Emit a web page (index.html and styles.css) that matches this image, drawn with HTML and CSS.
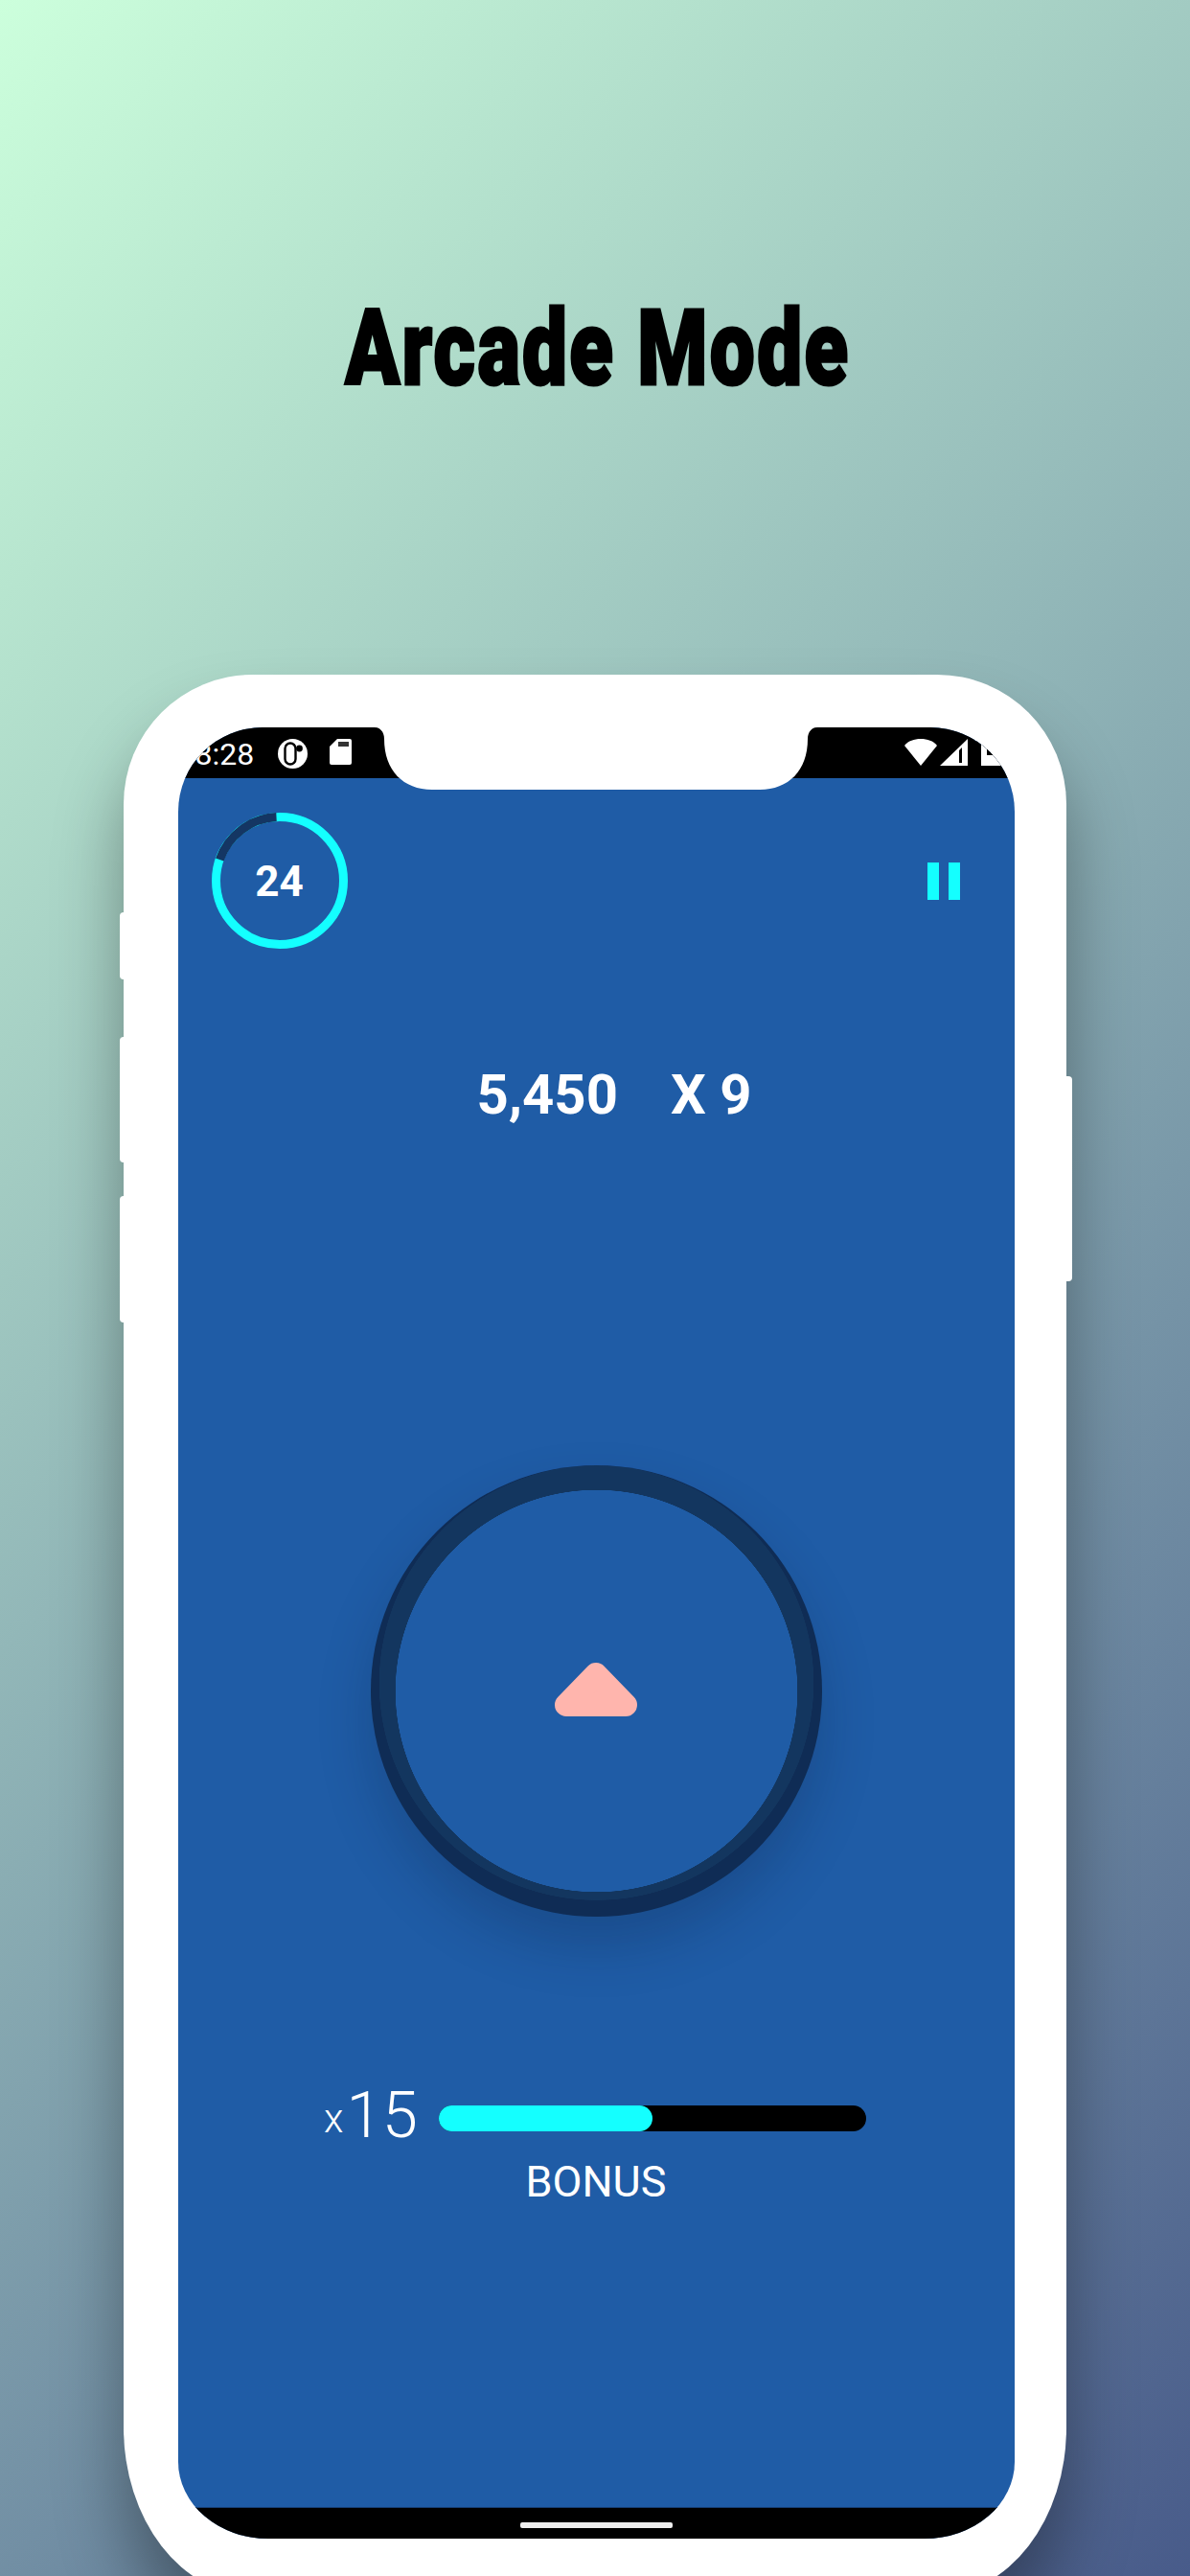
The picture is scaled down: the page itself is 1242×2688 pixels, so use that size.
FILE: index.html
```html
<!DOCTYPE html>
<html lang="en">
<head>
<meta charset="utf-8">
<title>Arcade Mode</title>
<link rel="stylesheet" href="styles.css">
</head>
<body>
<main class="page">
  <h1 class="title">Arcade Mode</h1>
  <div class="phone">
    <span class="btn btn-l1"></span>
    <span class="btn btn-l2"></span>
    <span class="btn btn-l3"></span>
    <span class="btn btn-r"></span>
    <div class="screen">
      <svg class="notch" viewBox="0 0 462 65" width="462" height="65" aria-hidden="true">
        <path d="M0 0H462C456 0 452 5 452 12C452 45 432 65 402 65H60C30 65 10 45 10 12C10 5 6 0 0 0Z" fill="#fff"/>
      </svg>
      <div class="status">
        <div class="status-left">
          <span class="time">8:28</span>
          <svg class="ic-circle" viewBox="0 0 31 31" width="31" height="31" aria-hidden="true">
            <circle cx="15.5" cy="15.5" r="15.5" fill="#fff"/>
            <rect x="7.5" y="4.5" width="11" height="22" rx="5.5" fill="none" stroke="#000" stroke-width="2.4"/>
            <circle cx="22.5" cy="10" r="3.4" fill="#000"/>
          </svg>
          <svg class="ic-sd" viewBox="0 0 23 27" width="23" height="27" aria-hidden="true">
            <path d="M8 0H21a2 2 0 0 1 2 2V25a2 2 0 0 1-2 2H2a2 2 0 0 1-2-2V8Z" fill="#fff"/>
            <rect x="9" y="3" width="11" height="5" fill="#333"/>
          </svg>
        </div>
        <div class="status-right">
          <svg viewBox="0 0 34 28" width="34" height="28" aria-hidden="true">
            <path d="M17 28L0 7C4 2 10 0 17 0S30 2 34 7Z" fill="#fff"/>
          </svg>
          <svg viewBox="0 0 29 28" width="29" height="28" aria-hidden="true">
            <path d="M0 28L29 0V28Z" fill="#fff"/>
            <path d="M20 12V25H23V9Z" fill="#000"/>
          </svg>
          <span class="battery"></span>
        </div>
      </div>
      <header class="hud">
        <div class="timer">
          <svg viewBox="0 0 142 142" width="142" height="142" aria-hidden="true">
            <circle cx="71" cy="71" r="66.5" fill="none" stroke="#14ffff" stroke-width="9"/>
            <path d="M67.5 4.6A66.5 66.5 0 0 0 8.3 49" fill="none" stroke="#143663" stroke-width="9"/>
          </svg>
          <span class="timer-num">24</span>
        </div>
        <div class="pause"><span></span><span></span></div>
      </header>
      <div class="score"><span>5,450</span><span>X 9</span></div>
      <div class="ring">
        <svg viewBox="0 0 86 56" width="86" height="56" class="arrow" aria-hidden="true">
          <path d="M43 12L12 44H74Z" fill="#ffb5ad" stroke="#ffb5ad" stroke-width="24" stroke-linejoin="round"/>
        </svg>
      </div>
      <div class="bonus-row">
        <div class="mult"><span class="mult-x">x</span><span class="mult-n">15</span></div>
        <div class="track"><div class="fill"></div></div>
      </div>
      <div class="bonus-label">BONUS</div>
      <div class="nav"><span class="handle"></span></div>
    </div>
  </div>
</main>
</body>
</html>
```
FILE: styles.css
```css
* { box-sizing: border-box; }
html, body { margin: 0; padding: 0; }
body {
  width: 1242px;
  height: 2688px;
  overflow: hidden;
  font-family: Roboto, "Liberation Sans", sans-serif;
}
.page {
  height: 2688px;
  overflow: hidden;
  display: flex;
  flex-direction: column;
  align-items: center;
  background: linear-gradient(135deg, #ccffdc 0%, #485b8a 100%);
}
.title {
  margin: 304px 0 0 6px;
  height: 120px;
  font-family: Roboto, "Liberation Sans", sans-serif;
  font-size: 110px;
  line-height: 120px;
  font-weight: 900;
  color: #000;
  -webkit-text-stroke: 3px #000;
  letter-spacing: 3px;
  white-space: nowrap;
  transform: scaleX(.76);
}
.phone {
  position: relative;
  flex: none;
  margin-top: 280px;
  margin-left: -1px;
  width: 984px;
  height: 2004px;
  padding: 55px 54px 55px 57px;
  background: #fff;
  border-radius: 135px 135px 135px 135px / 135px 135px 175px 175px;
  box-shadow: 0 50px 70px rgba(0, 0, 0, .35);
}
.btn {
  position: absolute;
  width: 12px;
  background: #fff;
  border-radius: 4px;
}
.btn-l1 { left: -4px; top: 248px; height: 70px; }
.btn-l2 { left: -4px; top: 378px; height: 131px; }
.btn-l3 { left: -4px; top: 544px; height: 132px; }
.btn-r { right: -6px; top: 419px; height: 214px; }
.screen {
  position: relative;
  height: 1890px;
  display: flex;
  flex-direction: column;
  align-items: center;
  background: #1f5ca6;
  border-radius: 88px 88px 94px 94px / 88px 88px 80px 80px;
  overflow: hidden;
}
.notch {
  position: absolute;
  left: 205px;
  top: 0;
}
.status {
  align-self: stretch;
  flex: none;
  height: 53px;
  display: flex;
  justify-content: space-between;
  padding: 12px 0 0 18px;
  background: #000;
  color: #fff;
}
.status-left { display: flex; align-items: flex-start; gap: 23px; }
.time { font-size: 32px; line-height: 32px; margin-right: 2px; }
.status-right { display: flex; align-items: flex-start; gap: 3px; margin-right: 11px; }
.battery {
  width: 24px;
  height: 25px;
  margin: 3px 0 0 11px;
  border-left: 6px solid #fff;
  background: linear-gradient(#000 55%, #fff 55%);
}
.hud {
  align-self: stretch;
  flex: none;
  display: flex;
  justify-content: space-between;
  align-items: center;
  padding: 36px 57px 0 35px;
}
.timer {
  position: relative;
  width: 142px;
  height: 142px;
  display: flex;
  align-items: center;
  justify-content: center;
}
.timer svg { position: absolute; left: 0; top: 0; }
.timer-num { font-size: 44px; line-height: 44px; font-weight: 700; color: #fff; padding-top: 2px; }
.pause { display: flex; gap: 10px; }
.pause span { width: 12px; height: 39px; background: #14ffff; }
.score {
  flex: none;
  margin: 117px 0 0 38px;
  display: flex;
  gap: 55px;
  font-size: 58px;
  line-height: 70px;
  font-weight: 700;
  color: #fff;
}
.ring {
  flex: none;
  margin-top: 352px;
  width: 471px;
  height: 471px;
  border-radius: 50%;
  display: flex;
  align-items: center;
  justify-content: center;
  background:
    radial-gradient(circle 210px at 50% 50%, #1f5ca6 209.5px, transparent 210px),
    radial-gradient(circle 227px at 50% 48.2%, #13365f 226.5px, transparent 227px),
    #0f2c55;
  box-shadow: 0 30px 55px rgba(8, 24, 50, .22);
}
.arrow { margin-top: -4px; }
.bonus-row {
  flex: none;
  margin: 170px 0 0 -2px;
  display: flex;
  align-items: center;
  gap: 22px;
}
.mult { display: flex; align-items: baseline; gap: 3px; padding-top: 3px; color: #fff; font-weight: 300; line-height: 68px; }
.mult-x { font-size: 42px; transform: translateY(-5px); }
.mult-n { font-size: 67px; }
.track {
  width: 446px;
  height: 27px;
  border-radius: 14px;
  background: #000;
}
.fill {
  width: 50%;
  height: 100%;
  border-radius: 14px;
  background: #14ffff;
}
.bonus-label {
  flex: none;
  margin-top: 2px;
  font-size: 45px;
  line-height: 50px;
  color: #fff;
  font-weight: 400;
}
.nav {
  align-self: stretch;
  flex: none;
  margin-top: auto;
  height: 33px;
  background: #000;
  border-top: 1px solid #173f74;
  display: flex;
  justify-content: center;
  padding-top: 15px;
}
.handle { width: 159px; height: 6px; background: #eee; border-radius: 2px; }
```
